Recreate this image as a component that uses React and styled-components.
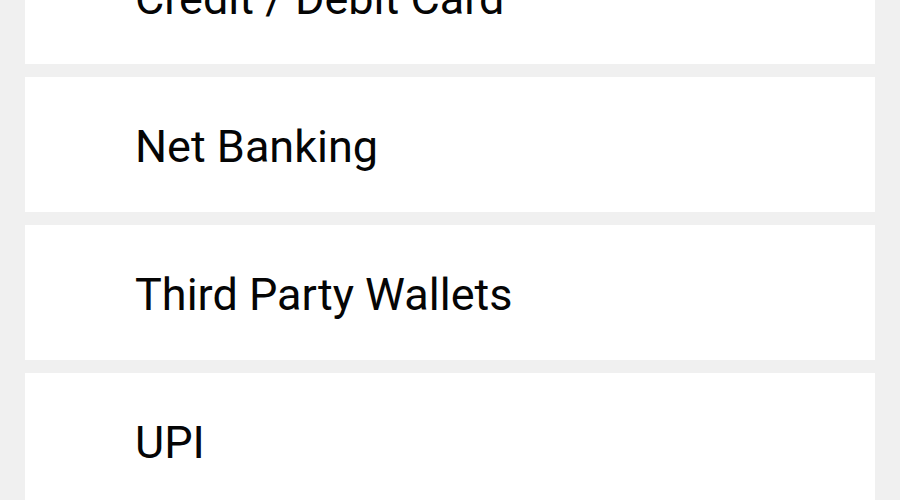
import React from 'react';
import styled, { createGlobalStyle } from 'styled-components';

const GlobalStyle = createGlobalStyle`
  html, body {
    margin: 0;
    padding: 0;
    background: #f0f0f0;
    overflow: hidden;
  }
  body {
    font-family: Roboto, "Noto Sans", sans-serif;
  }
`

const methods = ['Credit / Debit Card', 'Net Banking', 'Third Party Wallets', 'UPI'];

function App() {
  return (
    <>
      <GlobalStyle />
      <Page>
        <List>
          {methods.map((m) => (
            <Option key={m}>
              <Label>{m}</Label>
            </Option>
          ))}
        </List>
      </Page>
    </>
  )
}

export default App;

const Page = styled.div`
  width: 900px;
  height: 500px;
  overflow: hidden;
  background: #f0f0f0;
  padding: 0 25px;
  box-sizing: border-box;
`

const List = styled.div`
  display: flex;
  flex-direction: column;
  gap: 13px;
  margin-top: -71px;
`

const Option = styled.div`
  height: 135px;
  background: #ffffff;
  display: flex;
  align-items: center;
  padding-left: 110px;
  padding-top: 4px;
  box-sizing: border-box;
`

const Label = styled.span`
  font-size: 45px;
  color: #050505;
  line-height: 1;
`
